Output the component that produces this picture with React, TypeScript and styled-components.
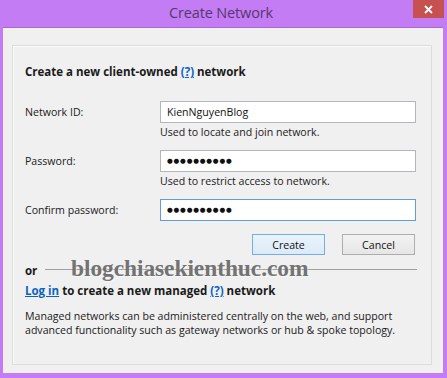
import styled, { createGlobalStyle } from "styled-components";

const GlobalStyle = createGlobalStyle`
  html, body {
    margin: 0;
    padding: 0;
    background: #c47cf4;
  }
  * {
    box-sizing: border-box;
  }
`;

const Frame = styled.div`
  width: 447px;
  height: 378px;
  background: #c47cf4;
  padding: 0 4px 5px 3px;
  display: flex;
  flex-direction: column;
  font-family: "Open Sans", "Noto Sans", sans-serif;
  font-size: 10.6px;
  color: #1a1a1a;
`;

const TitleBar = styled.div`
  height: 27px;
  display: grid;
  grid-template-columns: 1fr auto 1fr;
  align-items: start;
`;

const Title = styled.div`
  grid-column: 2;
  padding-top: 3px;
  font-size: 14.5px;
  color: #55386e;
  letter-spacing: -0.15px;
  transform: translateX(-2px);
`;

const CloseButton = styled.div`
  grid-column: 3;
  justify-self: end;
  width: 31px;
  height: 18px;
  margin-right: -1px;
  background: #c75050;
  display: flex;
  align-items: center;
  justify-content: center;
`;

const Body = styled.div`
  flex: 1;
  background: #f0f0f0;
  border-top: 1px solid #a66ad0;
  padding: 17px 11px 8px 9px;
  display: flex;
`;

const Panel = styled.div`
  flex: 1;
  border: 1px solid #dcdcdc;
  box-shadow: inset 1px 1px 0 #fbfbfb;
  padding: 18px 14px 0 12px;
  display: flex;
  flex-direction: column;
`;

const Heading = styled.div`
  font-weight: 700;
  line-height: 16px;
  height: 16px;
  font-size: 11.5px;
`;

const Link = styled.a`
  color: #0a63c2;
  text-decoration: underline;
  cursor: pointer;
`;

const Form = styled.div`
  margin-top: 21px;
  display: grid;
  grid-template-columns: 135px 256px;
  row-gap: 10px;
`;

const Label = styled.div`
  height: 22px;
  line-height: 22px;
`;

const FieldCol = styled.div`
  display: flex;
  flex-direction: column;
`;

const Input = styled.input<{ $focused?: boolean; $secret?: boolean }>`
  width: 256px;
  height: 22px;
  margin: 0;
  border: 1px solid ${(p) => (p.$focused ? "#5c9fdc" : "#b4b6bc")};
  background: #fff;
  padding: 0 0 0 6px;
  outline: none;
  font-family: ${(p) => (p.$secret ? '"DejaVu Sans", sans-serif' : '"Open Sans", sans-serif')};
  font-size: ${(p) => (p.$secret ? "6.6px" : "10.6px")};
  letter-spacing: ${(p) => (p.$secret ? "0.8px" : "0")};
  color: #111;
`;

const Help = styled.div`
  margin-top: 2px;
  line-height: 15px;
  height: 15px;
`;

const Buttons = styled.div`
  margin-top: 13px;
  padding-right: 2px;
  display: flex;
  justify-content: flex-end;
  gap: 17px;
`;

const Button = styled.button<{ $primary?: boolean }>`
  width: 73px;
  height: 21px;
  padding: 0;
  font-family: "Open Sans", sans-serif;
  font-size: 10.6px;
  color: #111;
  border: 1px solid ${(p) => (p.$primary ? "#74aee4" : "#adadad")};
  background: ${(p) =>
    p.$primary
      ? "linear-gradient(#eaf3fb, #dcebf8)"
      : "linear-gradient(#f2f2f2, #e6e6e6)"};
`;

const OrRow = styled.div`
  position: relative;
  margin-top: 7px;
  height: 16px;
  display: flex;
  align-items: center;
  font-weight: 700;
  font-size: 11.5px;
`;

const Rule = styled.div`
  flex: 1;
  height: 1px;
  background: #a0a0a0;
  margin: 0 0 0 8px;
  transform: translateY(-1px);
`;

const Watermark = styled.div`
  position: absolute;
  left: 46px;
  top: -7px;
  font-family: "Liberation Serif", "Times New Roman", serif;
  font-weight: 700;
  font-size: 23.5px;
  color: #737373;
  letter-spacing: -0.1px;
  text-shadow: 1px 1px 0 rgba(255, 255, 255, 0.6);
  white-space: nowrap;
`;

const Managed = styled.div`
  margin-top: 5px;
  font-weight: 700;
  font-size: 11.5px;
  line-height: 16px;
`;

const Paragraph = styled.p`
  margin: 11px 0 0;
  line-height: 13.5px;
`;

export default function App() {
  return (
    <>
      <GlobalStyle />
      <Frame>
        <TitleBar>
          <Title>Create Network</Title>
          <CloseButton>
            <svg width="9" height="9" viewBox="0 0 9 9">
              <path d="M1 1L8 8M8 1L1 8" stroke="#fff" strokeWidth="1.8" />
            </svg>
          </CloseButton>
        </TitleBar>
        <Body>
          <Panel>
            <Heading>
              Create a new client-owned <Link>(?)</Link> network
            </Heading>
            <Form>
              <Label>Network ID:</Label>
              <FieldCol>
                <Input readOnly value="KienNguyenBlog" />
                <Help>Used to locate and join network.</Help>
              </FieldCol>
              <Label>Password:</Label>
              <FieldCol>
                <Input readOnly $secret value="●●●●●●●●●●" />
                <Help>Used to restrict access to network.</Help>
              </FieldCol>
              <Label>Confirm password:</Label>
              <FieldCol>
                <Input readOnly $secret $focused value="●●●●●●●●●●" />
              </FieldCol>
            </Form>
            <Buttons>
              <Button $primary>Create</Button>
              <Button>Cancel</Button>
            </Buttons>
            <OrRow>
              or
              <Rule />
              <Watermark>blogchiasekienthuc.com</Watermark>
            </OrRow>
            <Managed>
              <Link>Log in</Link> to create a new managed <Link>(?)</Link> network
            </Managed>
            <Paragraph>
              Managed networks can be administered centrally on the web, and support
              <br />
              advanced functionality such as gateway networks or hub &amp; spoke topology.
            </Paragraph>
          </Panel>
        </Body>
      </Frame>
    </>
  );
}
